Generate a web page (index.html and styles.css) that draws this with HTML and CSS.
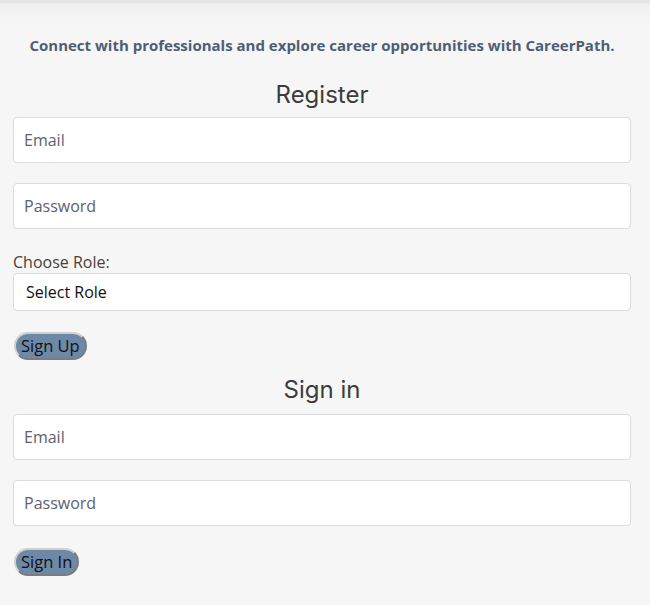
FILE: index.html
```html
<!DOCTYPE html>
<html lang="en">
<head>
<meta charset="utf-8">
<title>CareerPath</title>
<link rel="stylesheet" href="styles.css">
</head>
<body>
<div class="topbar"></div>
<main class="page">
  <p class="tagline">Connect with professionals and explore career opportunities with CareerPath.</p>
  <section class="form-block">
    <h2 class="title">Register</h2>
    <input class="field" type="email" placeholder="Email">
    <input class="field" type="password" placeholder="Password">
    <label class="label">Choose Role:</label>
    <div class="select">Select Role</div>
    <button class="btn">Sign Up</button>
  </section>
  <section class="form-block second">
    <h2 class="title">Sign in</h2>
    <input class="field" type="email" placeholder="Email">
    <input class="field" type="password" placeholder="Password">
    <button class="btn">Sign In</button>
  </section>
</main>
</body>
</html>
```
FILE: styles.css
```css
* { box-sizing: border-box; }
html, body { margin: 0; background: #f6f6f6; }
body { font-family: "Open Sans", "Liberation Sans", sans-serif; color: #333; }
.topbar {
  height: 24px;
  border-top: 3px solid #e4e4e4;
  background: linear-gradient(#efefef, #f6f6f6);
}
.page {
  width: 618px;
  margin-left: 13px;
  display: flex;
  flex-direction: column;
}
.tagline {
  margin: 11px 0 0;
  text-align: center;
  font-weight: 700;
  font-size: 15px;
  line-height: 20px;
  color: #4d5e74;
}
.form-block { display: flex; flex-direction: column; align-items: flex-start; }
.title {
  align-self: stretch;
  margin: 26px 0 8px;
  text-align: center;
  font-family: "Inter", "Lato", sans-serif;
  font-weight: 400;
  font-size: 24px;
  line-height: 28px;
  color: #3c3c3c;
}
.second .title { margin-top: 16px; margin-bottom: 10px; }
.field {
  width: 100%;
  height: 46px;
  margin: 0 0 20px;
  padding: 0 10px;
  border: 1px solid #dcdcdc;
  border-radius: 4px;
  background: #fff;
  font-family: "Open Sans", sans-serif;
  font-size: 16px;
  color: #333;
}
.field::placeholder { color: #5b6272; }
.label {
  font-size: 16px;
  line-height: 22px;
  color: #4a4036;
  margin: 2px 0 0;
}
.select {
  width: 100%;
  height: 38px;
  padding: 0 12px;
  border: 1px solid #dcdcdc;
  border-radius: 4px;
  background: #fff;
  font-size: 16px;
  line-height: 36px;
  color: #111;
}
.btn {
  margin: 21px 0 0 1px;
  height: 28px;
  padding: 0 5px;
  border: 2px outset #d0d0d0;
  border-radius: 14px;
  background: #6e88a8;
  font-family: "Open Sans", sans-serif;
  font-size: 16.5px;
  line-height: 22px;
  color: #111;
}
.second .btn { margin-top: 2px; }
```
